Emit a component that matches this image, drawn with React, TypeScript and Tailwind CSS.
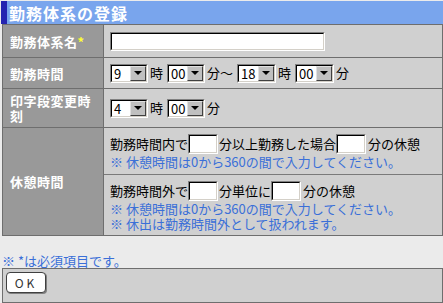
import type { ReactNode } from "react"

// Windows-classic style dropdown
function Select({ value, w }: { value: string; w: number }) {
  return (
    <span
      className="inline-flex h-[19px] border border-t-[#808080] border-l-[#808080] border-b-white border-r-white bg-white"
      style={{ width: w }}
    >
      <span className="flex flex-1 items-center border border-t-black border-l-black border-b-[#d4d0c8] border-r-[#d4d0c8] pl-[2px] text-[13px] leading-none text-black">
        <span className="flex-1">{value}</span>
        <span className="flex h-full w-[16px] items-center justify-center border border-t-[#e0e0e0] border-l-[#e0e0e0] border-b-[#404040] border-r-[#404040] bg-[#c0c0c0]">
          <svg width="8" height="4" viewBox="0 0 8 4">
            <path d="M0 0H8L4 4Z" fill="#000" />
          </svg>
        </span>
      </span>
    </span>
  )
}

function TextBox({ w, h = 20 }: { w: number; h?: number }) {
  return (
    <span
      className="inline-block border border-t-[#808080] border-l-[#808080] border-b-white border-r-white"
      style={{ width: w, height: h }}
    >
      <span className="block h-full w-full border border-t-black border-l-black border-b-[#d4d0c8] border-r-[#d4d0c8] bg-white" />
    </span>
  )
}

function Label({ children }: { children: ReactNode }) {
  return (
    <td className="w-[101px] border border-[#6e6e6e] bg-[#999999] pl-[7px] pr-[4px] text-[13px] font-bold leading-[15px] tracking-[0.5px] text-white">
      {children}
    </td>
  )
}

const note = "text-[13px] leading-[15px] text-[#3a6fd8]"

export default function App() {
  return (
    <div className="h-[303px] w-[443px] overflow-hidden bg-[#ebebeb] font-['Noto_Sans_CJK_JP',sans-serif] text-[13px] text-black">
      <div className="mt-[1px] ml-[1px] flex h-[23px] items-center border-l-[6px] border-[#2424b0] bg-[#79a5ed] pl-[2px] text-[16px] font-bold tracking-[1px] text-white">
        勤務体系の登録
      </div>

      <table className="ml-[2px] w-[441px] border-collapse border border-[#6e6e6e]">
        <tbody>
          <tr className="h-[33px]">
            <Label>
              勤務体系名<span className="text-[#ffff33]">*</span>
            </Label>
            <td className="border border-[#6e6e6e] bg-[#d0d0d0] pl-[6px]">
              <div className="flex items-center">
                <TextBox w={215} h={19} />
              </div>
            </td>
          </tr>
          <tr className="h-[31px]">
            <Label>勤務時間</Label>
            <td className="border border-[#6e6e6e] bg-[#d0d0d0] pl-[6px]">
              <div className="flex items-center">
                <Select value="9" w={38} />
                <span className="ml-[2px] mr-[4px]">時</span>
                <Select value="00" w={38} />
                <span className="ml-[2px] mr-[4px]">分～</span>
                <Select value="18" w={39} />
                <span className="ml-[2px] mr-[4px]">時</span>
                <Select value="00" w={39} />
                <span className="ml-[2px]">分</span>
              </div>
            </td>
          </tr>
          <tr className="h-[39px]">
            <Label>印字段変更時刻</Label>
            <td className="border border-[#6e6e6e] bg-[#d0d0d0] pl-[6px]">
              <div className="flex items-center">
                <Select value="4" w={38} />
                <span className="ml-[2px] mr-[4px]">時</span>
                <Select value="00" w={38} />
                <span className="ml-[2px]">分</span>
              </div>
            </td>
          </tr>
          <tr>
            <Label>休憩時間</Label>
            <td className="border border-[#6e6e6e] bg-[#d0d0d0] p-0">
              <div className="flex h-[47px] flex-col justify-end border-b border-[#7a7a7a] pb-[5px] pl-[6px]">
                <div className="flex items-center">
                  <span>勤務時間内で</span>
                  <TextBox w={30} />
                  <span className="ml-[1px]">分以上勤務した場合</span>
                  <TextBox w={30} />
                  <span className="ml-[2px]">分の休憩</span>
                </div>
                <div className={note}>※ 休憩時間は0から360の間で入力してください。</div>
              </div>
              <div className="flex h-[60px] flex-col pl-[6px] pt-[6px]">
                <div className="flex items-center">
                  <span>勤務時間外で</span>
                  <TextBox w={30} />
                  <span className="ml-[1px]">分単位に</span>
                  <TextBox w={30} />
                  <span className="ml-[2px]">分の休憩</span>
                </div>
                <div className={note}>※ 休憩時間は0から360の間で入力してください。</div>
                <div className={note}>※ 休出は勤務時間外として扱われます。</div>
              </div>
            </td>
          </tr>
        </tbody>
      </table>

      <div className={`mt-[17px] pl-[2px] ${note}`}>※ *は必須項目です。</div>

      <div className="ml-[2px] h-[35px] w-[441px] border border-[#6e6e6e] bg-[#d0d0d0] pl-[3px] pt-[3px]">
        <button className="flex h-[21px] w-[40px] items-center justify-center rounded-[4px] border border-[#404040] bg-white text-[12px] tracking-[3px] text-[#333] shadow-[1px_1px_0_#808080]">
          OK
        </button>
      </div>
    </div>
  )
}
